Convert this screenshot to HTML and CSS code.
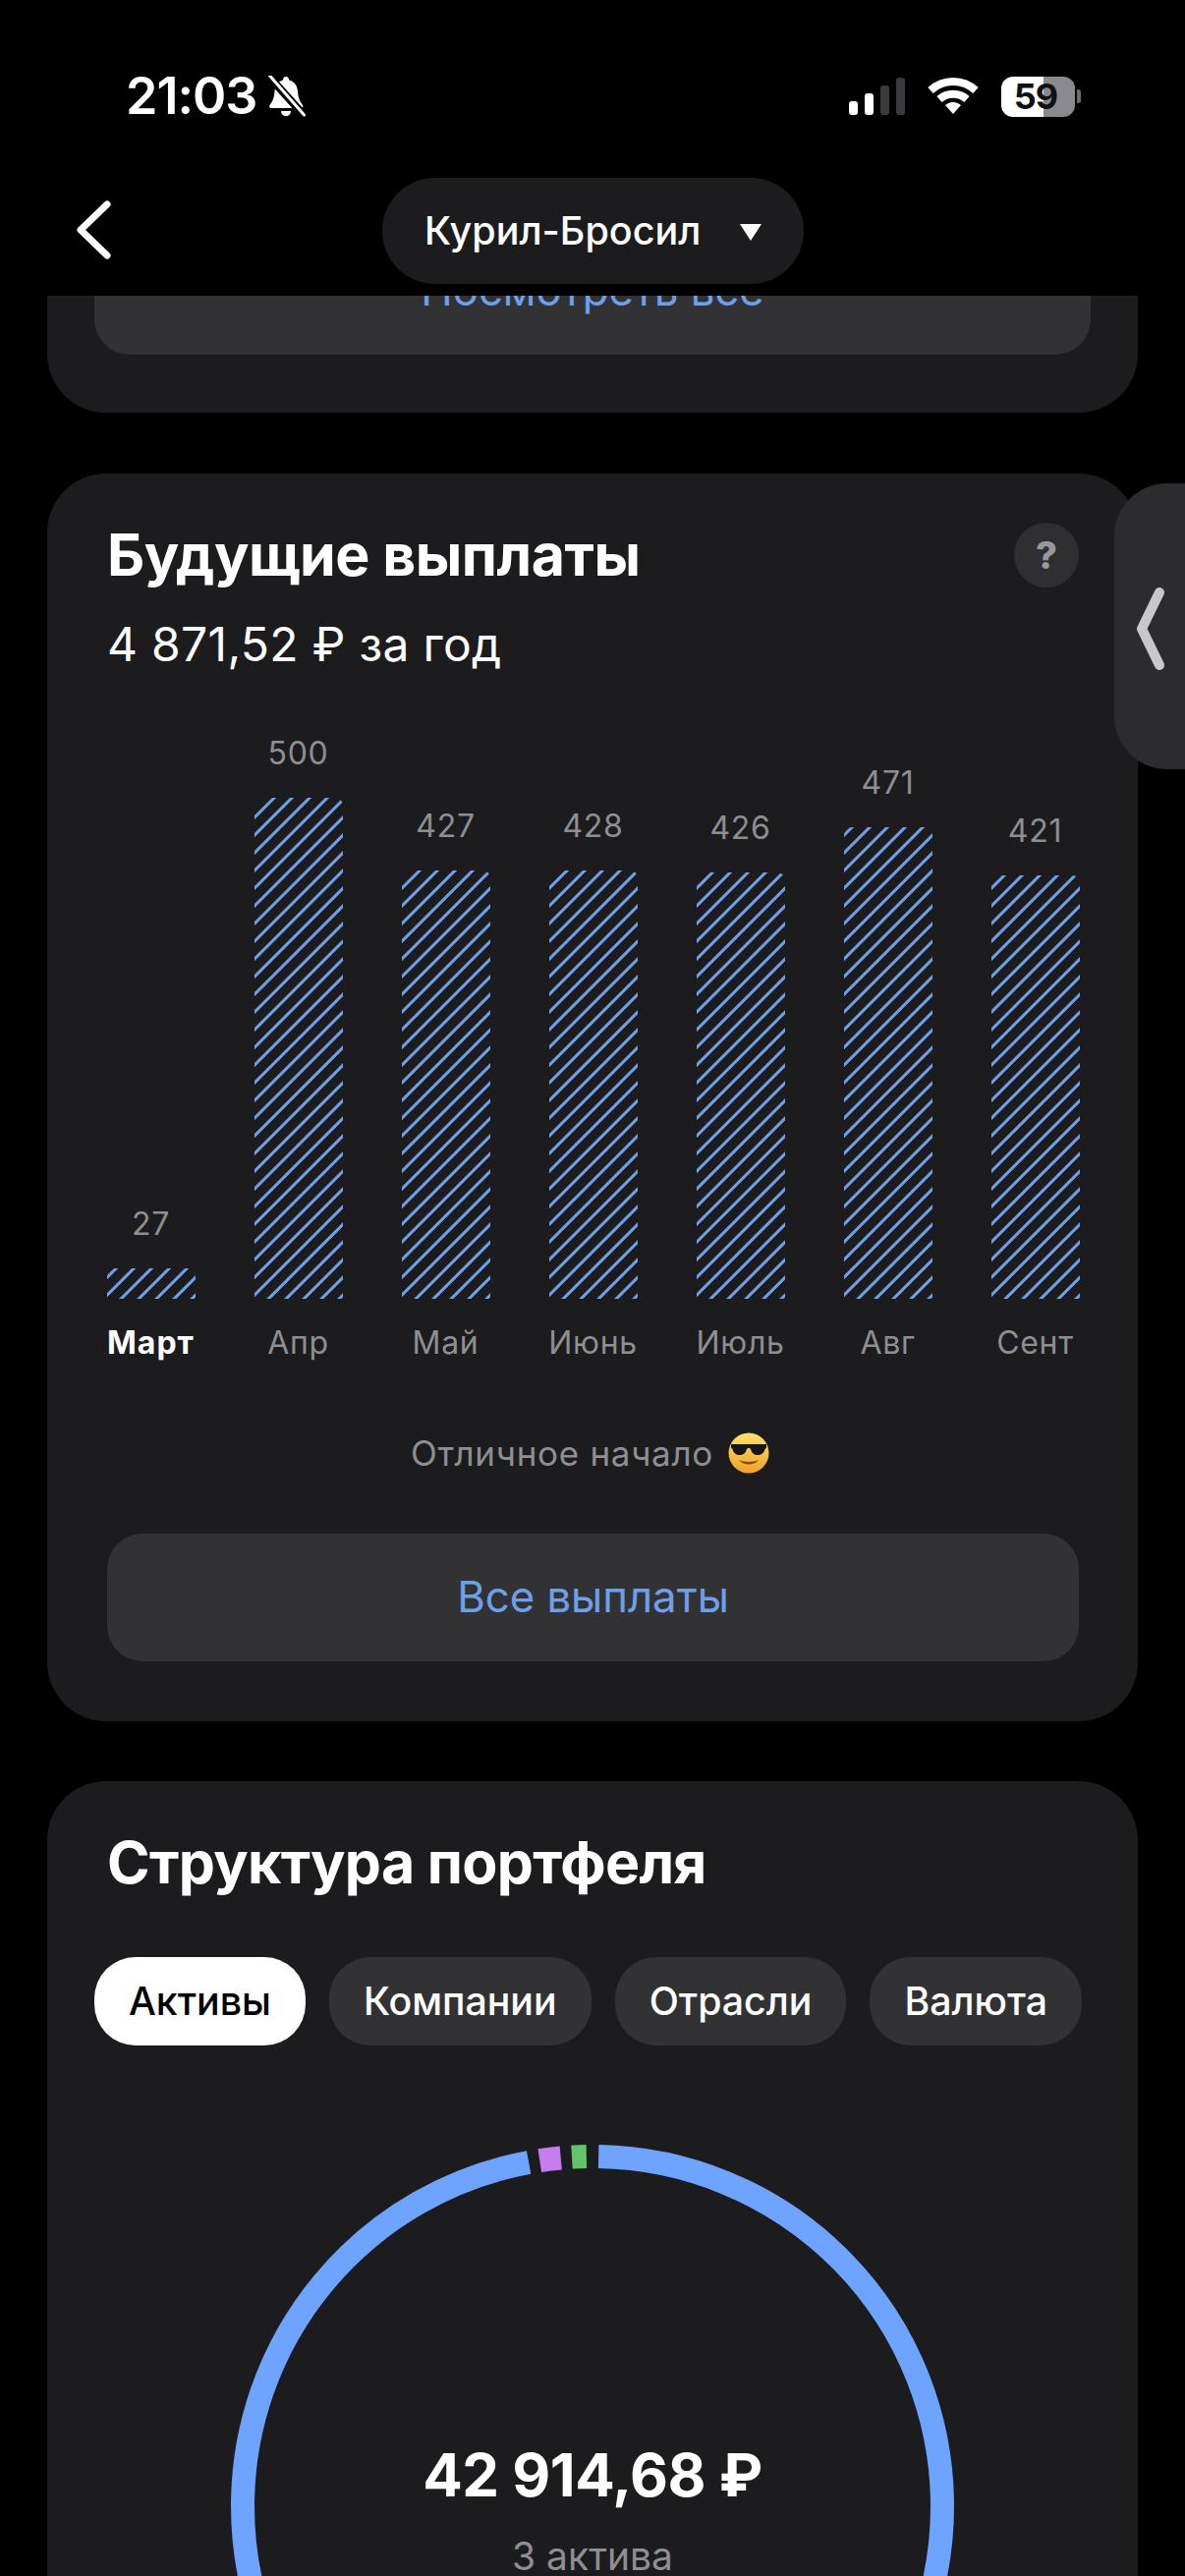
FILE: index.html
```html
<!DOCTYPE html>
<html lang="ru">
<head>
<meta charset="utf-8">
<title>Курил-Бросил</title>
<link rel="stylesheet" href="styles.css">
</head>
<body>
<div class="screen">
  <header class="top">
    <div class="status">
      <div class="status-left">
        <span class="time">21:03</span>
        <svg class="bell" viewBox="0 0 41 42"><path d="M20 1c2 0 3 1.500 3.200 3.500C29 6 31.500 10.500 32 16c.4 5 1.500 10 5 14 1 1.500 0 3-1.500 3H5c-1.500 0-2.500-1.500-1.500-3 3.500-4 4.600-9 5-14C9 10.500 11.500 6 17 4.500 17.200 2.500 18 1 20 1z" fill="#fff"/><path d="M15 36h10c0 3-2 5-5 5s-5-2-5-5z" fill="#fff"/><path d="M2 0l37 41" stroke="#000" stroke-width="8"/><path d="M3.500 0l35 40" stroke="#fff" stroke-width="3" stroke-linecap="round"/></svg>
      </div>
      <div class="status-right">
        <svg class="signal" viewBox="0 0 58 38"><rect x="0" y="24" width="9" height="14" rx="3" fill="#fff"/><rect x="16" y="16" width="9" height="22" rx="3" fill="#fff"/><rect x="32" y="8" width="9" height="30" rx="3" fill="#3a3a3c"/><rect x="48" y="0" width="9" height="38" rx="3" fill="#3a3a3c"/></svg>
        <svg class="wifi" viewBox="0 0 52 38"><path d="M3 13C16 1 36 1 49 13" fill="none" stroke="#fff" stroke-width="8"/><path d="M12 22c8-7 20-7 28 0" fill="none" stroke="#fff" stroke-width="8"/><path d="M18 28c5-4 11-4 16 0l-8 9z" fill="#fff"/></svg>
        <div class="battery"><div class="battery-body"><span>59</span></div><div class="battery-nub"></div></div>
      </div>
    </div>
    <nav class="nav">
      <svg class="back" viewBox="0 0 36 60"><path d="M32 4L5 30l27 26" fill="none" stroke="#fff" stroke-width="7" stroke-linecap="round" stroke-linejoin="round"/></svg>
      <div class="selector"><span>Курил-Бросил</span><i class="caret"></i></div>
    </nav>
  </header>

  <main class="scroll">
    <section class="card card-clipped">
      <div class="action action-narrow">Посмотреть все</div>
    </section>

    <section class="card card-payouts">
      <div class="title-row">
        <h2 class="title">Будущие выплаты</h2>
        <div class="help">?</div>
      </div>
      <p class="subtitle">4 871,52 ₽ за год</p>
      <div class="chart">
        <div class="col"><span class="val">27</span><div class="bar" style="height:31px"></div><span class="mon mon-now">Март</span></div>
        <div class="col"><span class="val">500</span><div class="bar" style="height:510px"></div><span class="mon">Апр</span></div>
        <div class="col"><span class="val">427</span><div class="bar" style="height:436px"></div><span class="mon">Май</span></div>
        <div class="col"><span class="val">428</span><div class="bar" style="height:436px"></div><span class="mon">Июнь</span></div>
        <div class="col"><span class="val">426</span><div class="bar" style="height:434px"></div><span class="mon">Июль</span></div>
        <div class="col"><span class="val">471</span><div class="bar" style="height:480px"></div><span class="mon">Авг</span></div>
        <div class="col"><span class="val">421</span><div class="bar" style="height:431px"></div><span class="mon">Сент</span></div>
      </div>
      <div class="note">Отличное начало
        <svg class="emoji" viewBox="0 0 42 42">
          <defs><linearGradient id="face" x1="0" y1="0" x2="0" y2="1"><stop offset="0" stop-color="#fde36a"/><stop offset="1" stop-color="#f0a02a"/></linearGradient></defs>
          <circle cx="21" cy="21" r="20.500" fill="url(#face)"/>
          <path d="M3 12h36v3c0 1-1 1-1.500 2-1 4-4 6-7.500 6s-6-2-7-6c-.5-1.500-3.500-1.500-4 0-1 4-3.500 6-7 6s-6.500-2-7.500-6C4 16 3 16 3 15z" fill="#17171a"/>
          <path d="M11 28c5 6 15 6 20 0-5 2.500-15 2.500-20 0z" fill="#8a4b10"/>
        </svg>
      </div>
      <div class="action">Все выплаты</div>
    </section>

    <section class="card card-structure">
      <h2 class="title title-structure">Структура портфеля</h2>
      <div class="pills">
        <div class="pill pill-on">Активы</div>
        <div class="pill">Компании</div>
        <div class="pill">Отрасли</div>
        <div class="pill">Валюта</div>
      </div>
      <div class="ring-wrap">
        <svg class="ring" viewBox="0 0 736 736">
          <circle class="seg seg-blue" cx="368" cy="368" r="356" pathLength="360" stroke-dasharray="348.500 11.500" stroke-dashoffset="-1"/>
          <circle class="seg seg-purple" cx="368" cy="368" r="356" pathLength="360" stroke-dasharray="3.500 356.500" stroke-dashoffset="-351.300"/>
          <circle class="seg seg-green" cx="368" cy="368" r="356" pathLength="360" stroke-dasharray="2.400 357.600" stroke-dashoffset="-356.600"/>
        </svg>
        <div class="ring-center">
          <div class="total">42 914,68 ₽</div>
          <div class="count">3 актива</div>
        </div>
      </div>
    </section>
  </main>

  <aside class="side-tab">
    <svg viewBox="0 0 30 84"><path d="M24 5L6 42l18 37" fill="none" stroke="#c7c7cc" stroke-width="10" stroke-linecap="round" stroke-linejoin="round"/></svg>
  </aside>
</div>
</body>
</html>
```

FILE: styles.css
```css
* { box-sizing: border-box; }
html, body { margin: 0; padding: 0; background: #000; }
body { font-family: Inter, "Noto Sans", "Liberation Sans", sans-serif; color: #fff; }

.screen {
  position: relative;
  width: 1206px;
  height: 2622px;
  overflow: hidden;
  background: #000;
  display: flex;
  flex-direction: column;
}

/* top area */
.top { height: 301px; flex: none; }
.status {
  height: 181px;
  padding: 72px 106px 0 128px;
  display: flex;
  justify-content: space-between;
  align-items: flex-start;
}
.status-left { display: flex; align-items: center; gap: 10px; height: 52px; }
.time { font-size: 52px; font-weight: 600; line-height: 52px; letter-spacing: -1px; }
.bell { width: 41px; height: 42px; }
.status-right { display: flex; align-items: center; gap: 22px; height: 52px; }
.signal { width: 58px; height: 38px; }
.wifi { width: 52px; height: 38px; }
.battery { display: flex; align-items: center; gap: 2px; margin-left: 1px; }
.battery-body {
  width: 75px;
  height: 41px;
  padding-right: 5px;
  border-radius: 12px;
  background: linear-gradient(90deg, #fff 0 57%, #8a8a8e 57% 100%);
  color: #111;
  font-size: 36px;
  font-weight: 700;
  line-height: 41px;
  text-align: center;
  letter-spacing: -1px;
}
.battery-nub { width: 4px; height: 14px; border-radius: 0 3px 3px 0; background: #6e6e72; }

.nav { position: relative; height: 108px; display: flex; justify-content: center; }
.back { position: absolute; left: 77px; top: 23px; width: 36px; height: 60px; }
.selector {
  width: 429px;
  height: 108px;
  margin-left: 1px;
  padding: 0 43px;
  border-radius: 54px;
  background: #1c1c1e;
  display: flex;
  align-items: center;
  justify-content: space-between;
  font-size: 39.500px;
  font-weight: 500;
}
.caret {
  width: 0;
  height: 0;
  border-left: 11px solid transparent;
  border-right: 11px solid transparent;
  border-top: 17px solid #fff;
  margin-top: 2px;
}

/* scrolling content */
.scroll {
  flex: 1;
  min-height: 0;
  overflow: hidden;
  padding: 0 48px;
  display: flex;
  flex-direction: column;
  gap: 62px;
}
.card { flex: none; background: #1c1c1e; border-radius: 60px; }
.card-clipped { margin-top: -70px; padding: 0 48px 59px; border-radius: 0 0 60px 60px; }
.card-payouts { padding: 50px 60px 61px 61px; }
.card-structure { margin-top: -1px; padding: 53px 0 0; height: 900px; }

.title { margin: 0; font-size: 59px; line-height: 60px; font-weight: 700; letter-spacing: -0.500px; }
.title-row { display: flex; justify-content: space-between; align-items: center; height: 66px; }
.help {
  width: 66px;
  height: 66px;
  border-radius: 50%;
  background: #2f2f31;
  color: #98989e;
  font-size: 38px;
  font-weight: 800;
  line-height: 66px;
  text-align: center;
}
.subtitle { margin: 33px 0 0; font-size: 48px; line-height: 50px; font-weight: 400; letter-spacing: 0.300px; }

.chart {
  margin-top: 66px;
  display: grid;
  grid-template-columns: repeat(7, 90px);
  column-gap: 60px;
  align-items: end;
}
.col { display: flex; flex-direction: column; align-items: center; }
.val, .mon {
  font-size: 32px;
  line-height: 40px;
  padding-right: 1px;
  color: #8e8e93;
  white-space: nowrap;
  letter-spacing: 0.700px;
}
.val { margin-bottom: 25px; }
.mon { margin-top: 25px; }
.mon-now { color: #fff; font-weight: 700; letter-spacing: 1px; }
.bar {
  width: 90px;
  border-radius: 8px 8px 0 0;
  background-image: repeating-linear-gradient(-45deg,
    transparent 0, transparent 0.900px,
    #6ea0ea 1.500px, #6ea0ea 3.900px,
    transparent 4.500px, transparent 12.730px);
}

.note {
  margin-top: 72px;
  height: 40px;
  padding-right: 6px;
  display: flex;
  align-items: center;
  justify-content: center;
  gap: 15px;
  font-size: 35px;
  color: #8e8e93;
  letter-spacing: 0.700px;
}
.emoji { width: 42px; height: 42px; flex: none; }

.action {
  height: 130px;
  margin-top: 62px;
  border-radius: 36px;
  background: #323234;
  color: #6ea0ea;
  font-size: 43.700px;
  line-height: 130px;
  text-align: center;
}
.action-narrow { margin-top: 0; }

.title-structure { padding-left: 61px; letter-spacing: -0.700px; }
.pills { margin-top: 66px; padding-left: 48px; display: flex; gap: 24px; }
.pill {
  height: 90px;
  padding: 0 35px;
  border-radius: 42px;
  background: #323234;
  font-size: 39.300px;
  font-weight: 500;
  line-height: 90px;
  white-space: nowrap;
}
.pill-on { background: #fff; color: #000; }

.ring-wrap { position: relative; width: 736px; height: 736px; margin: 101px 0 0 187px; }
.ring { width: 736px; height: 736px; transform: rotate(-90deg); }
.seg { fill: none; stroke-width: 24px; }
.seg-blue { stroke: #6ea4ff; }
.seg-purple { stroke: #c77df2; }
.seg-green { stroke: #62c466; }
.ring-center { position: absolute; left: 0; right: 0; top: 301px; text-align: center; }
.total { font-size: 60px; line-height: 70px; font-weight: 700; letter-spacing: -0.500px; }
.count { margin-top: 26px; font-size: 39px; line-height: 44px; color: #8e8e93; }

.side-tab {
  position: absolute;
  left: 1134px;
  top: 492px;
  width: 100px;
  height: 291px;
  border-radius: 54px 0 0 54px;
  background: #2c2c2e;
  padding: 106px 0 0 22px;
}
.side-tab svg { display: block; width: 30px; height: 84px; }
```
